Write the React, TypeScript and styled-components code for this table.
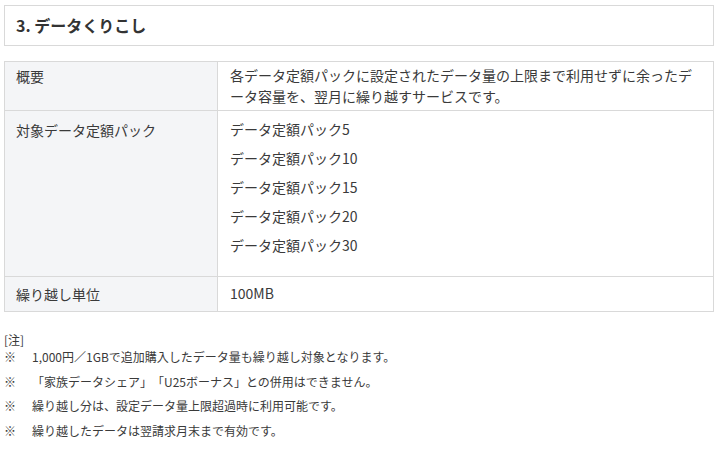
import React from 'react';
import styled, {createGlobalStyle} from 'styled-components';

const GlobalStyle = createGlobalStyle`
    body {
        margin: 0;
        background: #ffffff;
        font-family: "Noto Sans CJK JP", "Noto Sans", sans-serif;
        color: #3a3a3a;
        text-spacing-trim: space-all;
    }
`

const Page = styled.div`
    width: 710px;
    margin: 5px 0 0 4px;
`

const HeadingBox = styled.div`
    border: 1px solid #d9d9d9;
    padding: 9px 11px;
`

const Heading = styled.h3`
    margin: 0;
    font-size: 16px;
    line-height: 21px;
    font-weight: bold;
    color: #333333;
`

const Table = styled.div`
    margin-top: 15px;
    border: 1px solid #d9d9d9;
`

const Row = styled.div`
    display: grid;
    grid-template-columns: 213px 1fr;
    & + & {
        border-top: 1px solid #d9d9d9;
    }
`

const Label = styled.div<{$py: string}>`
    background: #f4f5f7;
    border-right: 1px solid #d9d9d9;
    padding: ${p => p.$py} 11px;
    font-size: 14px;
    line-height: 20px;
`

const Value = styled.div<{$py: string}>`
    padding: ${p => p.$py} 12px;
    font-size: 14px;
    line-height: 21px;
`

const PackList = styled.ul`
    list-style: none;
    margin: 0 0 12px;
    padding: 0;
`

const PackItem = styled.li`
    line-height: 29px;
`

const Notes = styled.div`
    margin-top: 20px;
    font-size: 12px;
`

const NoteTitle = styled.div`
    line-height: 16px;
`

const NoteList = styled.ul`
    list-style: none;
    margin: 0;
    padding: 0;
`

const Note = styled.li`
    display: flex;
    line-height: 18px;
    margin-bottom: 6.5px;
`

const Mark = styled.span`
    width: 28px;
    flex: none;
`

const packs = ['データ定額パック5', 'データ定額パック10', 'データ定額パック15', 'データ定額パック20', 'データ定額パック30']

const notes = [
    '1,000円／1GBで追加購入したデータ量も繰り越し対象となります。',
    '「家族データシェア」「U25ボーナス」との併用はできません。',
    '繰り越し分は、設定データ量上限超過時に利用可能です。',
    '繰り越したデータは翌請求月末まで有効です。',
]

export default function App() {
    return (
        <Page>
            <GlobalStyle/>
            <HeadingBox>
                <Heading>3. データくりこし</Heading>
            </HeadingBox>
            <Table>
                <Row>
                    <Label $py="4px">概要</Label>
                    <Value $py="3px">各データ定額パックに設定されたデータ量の上限まで利用せずに余ったデータ容量を、翌月に繰り越すサービスです。</Value>
                </Row>
                <Row>
                    <Label $py="9px">対象データ定額パック</Label>
                    <Value $py="4px">
                        <PackList>
                            {packs.map(p => <PackItem key={p}>{p}</PackItem>)}
                        </PackList>
                    </Value>
                </Row>
                <Row>
                    <Label $py="7px">繰り越し単位</Label>
                    <Value $py="6px">100MB</Value>
                </Row>
            </Table>
            <Notes>
                <NoteTitle>[注]</NoteTitle>
                <NoteList>
                    {notes.map(n => (
                        <Note key={n}><Mark>※</Mark>{n}</Note>
                    ))}
                </NoteList>
            </Notes>
        </Page>
    )
}
